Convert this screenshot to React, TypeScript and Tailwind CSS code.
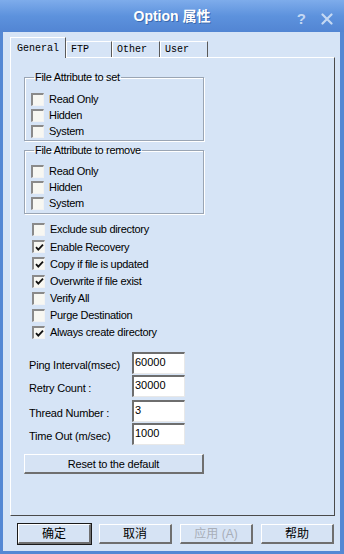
import React from 'react';

const sans = '"Liberation Sans", Arial, "Noto Sans CJK SC", sans-serif';
const cjk = '"Liberation Sans", "Noto Sans CJK SC", sans-serif';

function CheckBox({ checked }: { checked?: boolean }) {
  return (
    <span className="flex h-[13px] w-[13px] shrink-0 items-center justify-center border-t-[2px] border-l-[2px] border-r border-b border-t-[#8a8a8a] border-l-[#8a8a8a] border-r-[#f2f2f2] border-b-[#f2f2f2] bg-[#f7f7f2]">
      {checked && (
        <svg aria-hidden="true" className="h-[9px] w-[9px]" viewBox="0 0 9 9">
          <path d="M1 4.2l2.3 2.4L8 1.6" fill="none" stroke="#111" strokeWidth="1.8" />
        </svg>
      )}
    </span>
  );
}

function CheckRow({ label, checked, h }: { label: string; checked?: boolean; h: string }) {
  return (
    <div className={`flex items-center gap-[5px] ${h}`}>
      <CheckBox checked={checked} />
      <span className="text-[11px] tracking-[-0.3px] text-black">{label}</span>
    </div>
  );
}

function GroupBox({ title, items, className }: { title: string; items: string[]; className: string }) {
  return (
    <fieldset
      className={`w-[180px] border border-[#9aa5b4] pl-[6px] shadow-[inset_1px_1px_0_#ffffff,1px_1px_0_#ffffff] ${className}`}
    >
      <legend className="ml-[3px] px-[1px] text-[11px] leading-[14px] tracking-[-0.3px] text-black">{title}</legend>
      {items.map((it) => (
        <CheckRow key={it} label={it} h="h-[16px]" />
      ))}
    </fieldset>
  );
}

function Field({ label, value, className }: { label: string; value: string; className: string }) {
  return (
    <div className={`flex items-center ${className}`}>
      <span className="w-[103px] pt-[3px] text-[11px] tracking-[-0.2px] text-black">{label}</span>
      <div className="h-[22px] w-[53px] border-t-[2px] border-l-[2px] border-r border-b border-t-[#6e6e6e] border-l-[#6e6e6e] border-r-[#e8e8e8] border-b-[#e8e8e8] bg-white pl-[1px] text-[11px] leading-[16px] text-black">
        {value}
      </div>
    </div>
  );
}

function DlgButton({ label, primary, disabled }: { label: string; primary?: boolean; disabled?: boolean }) {
  return (
    <div
      className={`flex h-[22px] w-[75px] items-center justify-center border ${
        primary ? 'border-[#1a1a1a]' : 'border-transparent'
      }`}
    >
      <div className="flex h-full w-full items-center justify-center border-t border-l border-r-[2px] border-b-[2px] border-t-white border-l-white border-r-[#6f6f6f] border-b-[#6f6f6f] bg-[#d6e3f4]">
        <span
          className={`text-[12px] ${disabled ? 'text-[#a8aeb8]' : 'text-black'}`}
          style={{ fontFamily: cjk }}
        >
          {label}
        </span>
      </div>
    </div>
  );
}

export default function App() {
  const tabs = [
    { name: 'FTP', w: 'w-[46px]' },
    { name: 'Other', w: 'w-[48px]' },
    { name: 'User', w: 'w-[48px]' },
  ];
  const opts: [string, boolean][] = [
    ['Exclude sub directory', false],
    ['Enable Recovery', true],
    ['Copy if file is updated', true],
    ['Overwrite if file exist', true],
    ['Verify All', false],
    ['Purge Destination', false],
    ['Always create directory', true],
  ];

  return (
    <div className="flex h-[554px] w-[344px] flex-col bg-[#5488d4]" style={{ fontFamily: sans }}>
      {/* title bar */}
      <div className="relative flex h-[32px] items-center justify-center bg-gradient-to-b from-[#7eaceb] via-[#5d92dd] to-[#5285d3]">
        <span
          className="text-[14px] font-bold text-white [text-shadow:1px_1px_0_#3a68ad]"
          style={{ fontFamily: cjk }}
        >
          Option 属性
        </span>
        <div className="absolute right-[11px] top-[8px] flex items-center gap-[15px] text-[15px] font-bold text-[#c4d8f3]">
          <span>?</span>
          <svg aria-hidden="true" className="h-[12px] w-[12px]" viewBox="0 0 12 12">
            <path d="M1.5 1.5l9 9M10.5 1.5l-9 9" stroke="#c4d8f3" strokeWidth="2.2" strokeLinecap="round" />
          </svg>
        </div>
      </div>

      {/* client area */}
      <div className="ml-[3px] mr-[4px] mb-[3px] flex flex-1 flex-col bg-[#d6e4f6] pt-[5px]">
        {/* tabs */}
        <div className="ml-[7px] flex items-end">
          <div className="relative z-10 -mb-px flex h-[21px] w-[56px] items-start border-l border-t border-white border-r border-r-[#5a5a5a] bg-[#d6e4f6] pl-[6px] pt-[3px] text-[10px] text-black" style={{ fontFamily: '"Liberation Mono", monospace' }}>
            General
          </div>
          {tabs.map((t) => (
            <div
              key={t.name}
              className={`flex h-[16px] ${t.w} items-center border-l border-t border-white border-r border-r-[#5a5a5a] bg-[#d6e4f6] pl-[4px] text-[10px] text-black`}
              style={{ fontFamily: '"Liberation Mono", monospace' }}
            >
              {t.name}
            </div>
          ))}
        </div>

        {/* panel */}
        <div className="ml-[7px] flex h-[459px] w-[325px] flex-col border-l border-t border-white border-r border-b border-r-[#4a4a4a] border-b-[#4a4a4a] pl-[13px]">
          <GroupBox className="mt-[12px] pt-[7px] pb-[1px]" title="File Attribute to set" items={['Read Only', 'Hidden', 'System']} />
          <GroupBox className="mt-[2px] pt-[6px] pb-[2px]" title="File Attribute to remove" items={['Read Only', 'Hidden', 'System']} />

          <div className="mt-[7px] flex flex-col pl-[8px]">
            {opts.map(([l, c]) => (
              <CheckRow key={l} label={l} checked={c} h="h-[17.2px]" />
            ))}
          </div>

          <div className="mt-[11px] flex flex-col pl-[5px]">
            <Field className="" label="Ping Interval(msec)" value="60000" />
            <Field className="mt-[1px]" label="Retry Count :" value="30000" />
            <Field className="mt-[3px]" label="Thread Number :" value="3" />
            <Field className="mt-[1px]" label="Time Out (m/sec)" value="1000" />
          </div>

          <div className="mt-[9px] flex h-[20px] w-[180px] items-center justify-center border-t border-l border-r-[2px] border-b-[2px] border-t-white border-l-white border-r-[#6f6f6f] border-b-[#6f6f6f] bg-[#d6e3f4] text-[11px] tracking-[-0.2px] text-black">
            Reset to the default
          </div>
        </div>

        {/* dialog buttons */}
        <div className="mt-[7px] flex gap-[6px] pl-[14px]">
          <DlgButton label="确定" primary />
          <DlgButton label="取消" />
          <DlgButton label="应用 (A)" disabled />
          <DlgButton label="帮助" />
        </div>
      </div>
    </div>
  );
}
